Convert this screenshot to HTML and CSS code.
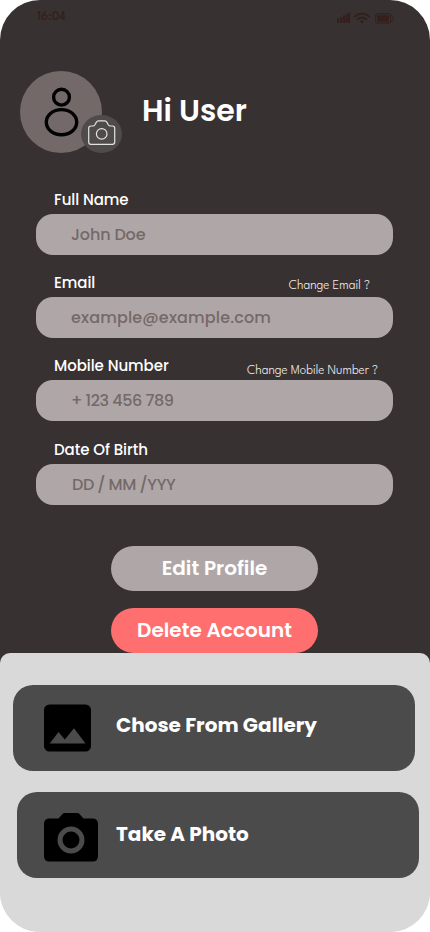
FILE: index.html
```html
<!DOCTYPE html>
<html lang="en">
<head>
<meta charset="utf-8">
<title>Profile</title>
<link rel="stylesheet" href="styles.css">
</head>
<body>
<main class="screen">
  <header class="status">
    <span class="time">16:04</span>
    <svg class="status-icons" width="58" height="13" viewBox="0 0 58 13">
      <g fill="currentColor">
        <rect x="0" y="6.3" width="2.2" height="4.7" rx=".6"/>
        <rect x="2.9" y="5" width="2.3" height="6" rx=".6"/>
        <rect x="5.8" y="3.3" width="2.2" height="7.7" rx=".6"/>
        <rect x="8.4" y="2" width="2.2" height="9" rx=".6"/>
        <rect x="11" y="0.6" width="2.2" height="10.4" rx=".6"/>
        <circle cx="25" cy="9.6" r="1.5"/>
        <rect x="40" y="3.2" width="12" height="6.6" rx="1"/>
      </g>
      <g fill="none" stroke="currentColor">
        <path d="M17.7 4.6Q25-1.6 32.3 4.6" stroke-width="2" stroke-linecap="round"/>
        <path d="M20.6 7.2Q25 3.6 29.4 7.2" stroke-width="1.9" stroke-linecap="round"/>
        <rect x="38.6" y="1.7" width="15" height="9.4" rx="2"/>
        <path d="M54 3q2.4 1 2.4 3.4T54 9.9"/>
      </g>
    </svg>
  </header>

  <section class="profile">
    <div class="avatar">
      <svg width="82" height="82" viewBox="0 0 82 82" fill="none" stroke="#000" stroke-width="3.4">
        <circle cx="41.5" cy="26.200" r="7.900"/>
        <ellipse cx="41.500" cy="51.200" rx="15.200" ry="12.600"/>
      </svg>
      <div class="badge">
        <svg width="41" height="38" viewBox="0 0 41 38" fill="none" stroke="#e4e2e2" stroke-width="1.2" stroke-linejoin="round">
          <path d="M10 11h2q1.1 0 1.9-1.3l1.5-2.6Q16.2 5.8 17.500 5.800h6.300q1.300 0 2 1.300l1.500 2.600Q28.100 11 29.300 11h2.200q2.200 0 2.200 2.200v13.800q0 2.400-2.300 2.400H9.900q-2.200 0-2.200-2.400V13.200Q7.700 11 10 11z"/>
          <circle cx="20.700" cy="18.900" r="5.300"/>
        </svg>
      </div>
    </div>
    <h1 class="greeting">Hi User</h1>
  </section>

  <form class="form">
    <div class="field">
      <div class="field-head"><span class="label">Full Name</span></div>
      <div class="input"><span class="v-name">John Doe</span></div>
    </div>
    <div class="field">
      <div class="field-head"><span class="label">Email</span><span class="change change-email">Change Email ?</span></div>
      <div class="input"><span class="v-email">example@example.com</span></div>
    </div>
    <div class="field">
      <div class="field-head"><span class="label">Mobile Number</span><span class="change change-mobile">Change Mobile Number ?</span></div>
      <div class="input"><span class="v-mobile">+ 123 456 789</span></div>
    </div>
    <div class="field field-last">
      <div class="field-head"><span class="label">Date Of Birth</span></div>
      <div class="input"><span class="v-birth">DD / MM /YYY</span></div>
    </div>
  </form>

  <div class="actions">
    <div class="button edit">Edit Profile</div>
    <div class="button delete">Delete Account</div>
  </div>

  <section class="sheet">
    <div class="option">
      <svg class="option-icon" width="54" height="50" viewBox="0 0 54 50">
        <rect x="0" y="1.500" width="47" height="47" rx="5.500"/>
        <path fill="#4b4b4b" d="M5.700 40.500L14.500 29l6.300 7.500L30 25.200l11.500 15.300z"/>
      </svg>
      <span class="option-text">Chose From Gallery</span>
    </div>
    <div class="option option-photo">
      <svg class="option-icon" width="54" height="50" viewBox="0 0 54 50">
        <path d="M5.500 6.500h9l4-4.600Q19.500 1 20.500 1h13q1 0 2 .900l4 4.600h9Q54 6.500 54 12v32q0 5.500-5.500 5.500h-43Q0 49.500 0 44V12q0-5.500 5.500-5.500z"/>
        <circle cx="27" cy="28" r="11" fill="none" stroke="#4b4b4b" stroke-width="5"/>
      </svg>
      <span class="option-text">Take A Photo</span>
    </div>
  </section>
</main>
</body>
</html>
```

FILE: styles.css
```css
* { box-sizing: border-box; }
body { margin: 0; background: #fff; font-family: Poppins, Inter, "Liberation Sans", sans-serif; }
.screen {
  width: 430px; height: 932px; border-radius: 40px; overflow: hidden;
  background: linear-gradient(#383131 700px, #d9d9d9 700px); display: flex; flex-direction: column; white-space: nowrap;
}
.status {
  height: 71px; flex: none; padding: 8px 35px 0 37px; display: flex;
  justify-content: space-between; align-items: flex-start; color: #341f1c;
}
.time { padding-top: 1px; font: 500 13px/17px "League Spartan", Lato, sans-serif; }
.status-icons { margin-top: 4px; }
.profile { height: 82px; flex: none; padding-left: 20px; display: flex; align-items: center; gap: 40px; }
.avatar { position: relative; width: 82px; height: 82px; border-radius: 50%; background: #746969; }
.avatar svg { display: block; }
.badge { position: absolute; left: 61px; top: 44px; width: 41px; height: 38px; border-radius: 50%; background: #504b4b; }
.greeting { margin: 0; padding-bottom: 3px; color: #fff; font-size: 30px; line-height: 40px; font-weight: 600; }
.form { padding: 19px 37px 0 36px; }
.field { height: 83px; }
.field-last { height: 84px; padding-top: 1px; }
.field-head { height: 42px; padding: 17px 15px 0 18px; display: flex; justify-content: space-between; }
.label { color: #fff; font-size: 15px; line-height: 22px; font-weight: 500; letter-spacing: -.06px; }
.change { color: #f1efef; font: 300 13px/18px "League Spartan", Lato, sans-serif; }
.change-email { padding-top: 5px; margin-right: 8px; }
.change-mobile { padding-top: 7px; }
.input {
  height: 41px; padding-left: 35px; border-radius: 17px; background: #afa7a7;
  color: #746969; font-size: 16px; line-height: 41px; font-weight: 500;
}
.v-name { letter-spacing: -.15px; }
.v-email { letter-spacing: .15px; }
.v-mobile { letter-spacing: -.35px; word-spacing: -.4px; }
.v-birth { padding-left: 1px; letter-spacing: -.3px; word-spacing: -.6px; }
.actions { margin-right: 1px; padding-top: 41px; display: flex; flex-direction: column; align-items: center; gap: 17px; }
.button { width: 207px; height: 45px; border-radius: 22.5px; color: #fff; font-size: 20px; line-height: 44px; font-weight: 600; text-align: center; }
.edit { background: #afa7a7; }
.delete { background: #ff6f6f; }
.sheet { flex: 1; padding: 32px 0 0 13px; background: #d9d9d9; border-radius: 10px 10px 0 0; display: flex; flex-direction: column; gap: 21px; }
.option { width: 402px; height: 86px; padding-left: 31px; border-radius: 20px; background: #4b4b4b; display: flex; align-items: center; gap: 18px; }
.option-photo { margin-left: 4px; padding-left: 27px; }
.option-text { color: #fff; font-size: 20px; line-height: 30px; font-weight: 700; margin-top: -6px; }
.option-photo .option-icon { margin-top: 4px; }
.option-photo .option-text { margin-top: -2px; }
```
